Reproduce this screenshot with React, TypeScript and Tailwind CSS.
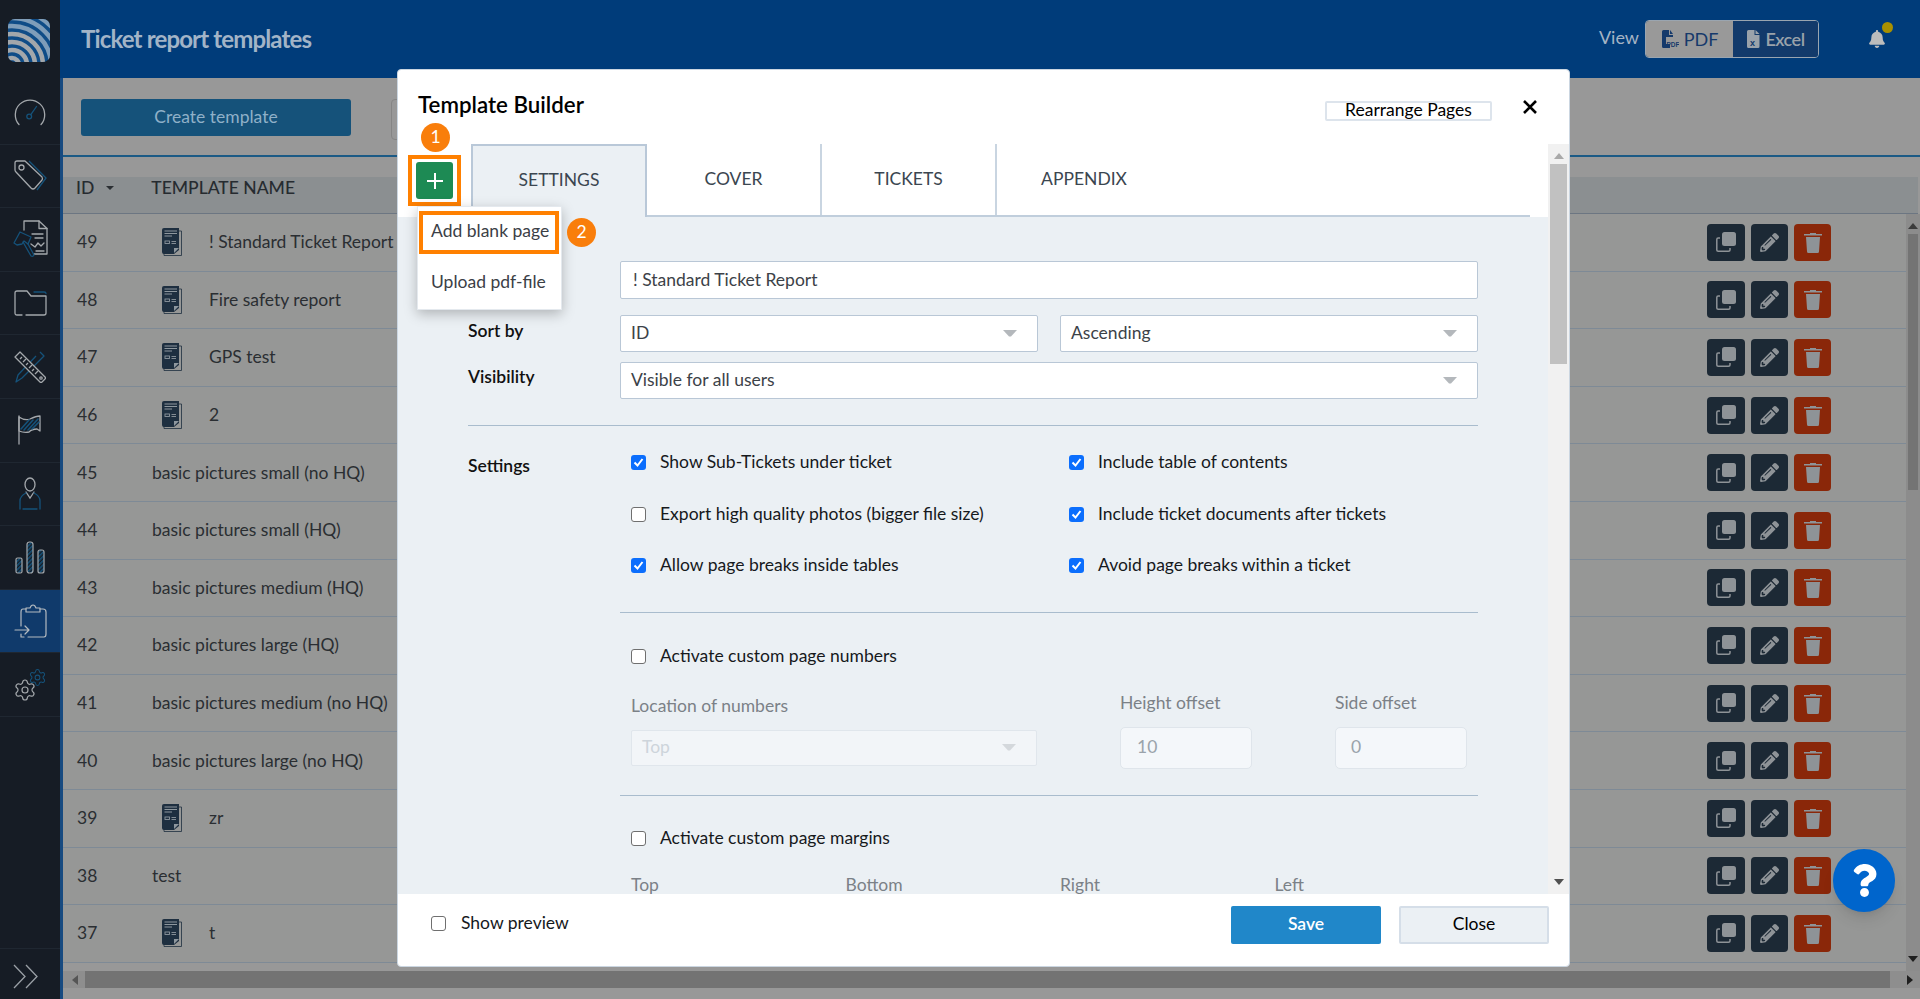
import React from "react";
import { FaBell, FaPencilAlt, FaQuestion } from "react-icons/fa";
import { Settings as Gear } from "lucide-react";

const G = "#a4a8ac";
const B = "#15527a";

function Logo() {
  return (
    <svg width="42" height="43" viewBox="0 0 42 43">
      <defs>
        <clipPath id="lg"><rect width="42" height="43" rx="7" /></clipPath>
      </defs>
      <g clipPath="url(#lg)">
        <rect width="42" height="43" fill="#0f4c87" />
        {[7, 15, 23, 31, 39, 47, 55].map((r, i) => (
          <circle key={r} cx="4" cy="46" r={r} fill="none" stroke={i > 3 ? "#7f9db9" : "#a3a7ab"} strokeWidth="4.6" />
        ))}
      </g>
    </svg>
  );
}

function Gauge() {
  return (
    <svg width="32" height="30" viewBox="0 0 32 30" fill="none" strokeWidth="1.3" strokeLinecap="round">
      <path d="M5 27.5A14.7 14.7 0 1 1 27 27.5" stroke={G} />
      <circle cx="15.2" cy="19.5" r="2.4" stroke={B} />
      <path d="M16.8 17.6L22.5 9.5" stroke={B} />
    </svg>
  );
}
function Tag() {
  return (
    <svg width="33" height="31" viewBox="0 0 33 31" fill="none" strokeWidth="1.3" strokeLinejoin="round">
      <path d="M1 3Q1 1 3 1H11L28 17Q29 19 28 20L21 28Q19 30 17 28L2 12Q1 11 1 10Z" stroke={G} />
      <circle cx="7.5" cy="7.5" r="2.5" stroke={G} />
      <path d="M15 1L32 18L23 30" stroke={B} />
    </svg>
  );
}
function DocHammer() {
  return (
    <svg width="35" height="38" viewBox="0 0 35 38" fill="none" strokeWidth="1.3" strokeLinecap="round" strokeLinejoin="round">
      <path d="M11 10V1H26L34 8.5V34H21" stroke={G} />
      <path d="M26 1V8.5H34" stroke={G} />
      <path d="M19 14H30M22 18H30M18 24L22 27L25 23L28 26L31 23M23 31H31" stroke={G} />
      <path d="M1 23L7 12L18 17L15 24L11 21L9 24L4 25Z" stroke={B} />
      <path d="M10 22L18 36Q20 37 21 35L15 24" stroke={B} />
    </svg>
  );
}
function Folder() {
  return (
    <svg width="33" height="26" viewBox="0 0 33 26" fill="none" strokeWidth="1.3" strokeLinecap="round" strokeLinejoin="round">
      <path d="M8 25H3Q1 25 1 23V3Q1 1 3 1H13L17 6H32V23Q32 25 30 25H12" stroke={G} />
      <path d="M20 2H30Q32 2 32 3.5" stroke={B} />
    </svg>
  );
}
function RulerPencil() {
  return (
    <svg width="32" height="33" viewBox="0 0 32 33" fill="none" strokeWidth="1.3" strokeLinejoin="round">
      <path d="M26 2L30 6L8 28L2 32L4 25L22 6" stroke={B} />
      <path d="M1 7L6 2L31 27Q32 28 31 29L28 32Q27 33 26 32Z" fill="#161c25" stroke={G} />
      <path d="M6 9L8 7M9 12L12 9M12 15L14 13M15 18L18 15M18 21L20 19M21 24L24 21" stroke={G} />
      <circle cx="27" cy="28" r="1.2" stroke={G} />
    </svg>
  );
}
function FlagIcon() {
  return (
    <svg width="24" height="30" viewBox="0 0 24 30" fill="none" strokeWidth="1.3" strokeLinecap="round" strokeLinejoin="round">
      <path d="M1 1V29" stroke={G} />
      <path d="M1 2Q7 6 12 4Q18 1 22 1V16L19 14Q14 14 11 17Q6 18 1 16Z" stroke={G} />
      <path d="M3 14L11 5M6 15L15 5M10 15L20 4M14 14L21 7" stroke={B} strokeWidth="1.6" />
    </svg>
  );
}
function Person() {
  return (
    <svg width="22" height="33" viewBox="0 0 22 33" fill="none" strokeWidth="1.3" strokeLinecap="round">
      <ellipse cx="11" cy="7.5" rx="5" ry="6.5" stroke={G} />
      <path d="M7 15L11 21L15 15" stroke={G} />
      <path d="M1 32V24Q1 19 7 16M21 32V24Q21 19 15 16M4 32H18" stroke={B} />
    </svg>
  );
}
function Bars() {
  return (
    <svg width="30" height="33" viewBox="0 0 30 33" fill="none" strokeWidth="1.2">
      <defs>
        <pattern id="ht" width="3" height="3" patternUnits="userSpaceOnUse" patternTransform="rotate(45)">
          <rect width="1.6" height="3" fill={B} />
        </pattern>
      </defs>
      <rect x="1" y="17" width="6" height="15" rx="1.5" stroke={G} fill="url(#ht)" />
      <rect x="12" y="1" width="6" height="31" rx="2.5" stroke={G} fill="url(#ht)" />
      <rect x="23" y="9" width="6" height="23" rx="2" stroke={G} fill="url(#ht)" />
    </svg>
  );
}
function Clipboard() {
  return (
    <svg width="33" height="34" viewBox="0 0 33 34" fill="none" stroke="#b4bac0" strokeWidth="1.2" strokeLinecap="round" strokeLinejoin="round">
      <path d="M7 22V8Q7 5 9 5H12M26 5H29Q32 5 32 8V30Q32 33 30 33H14" />
      <path d="M12 8V4H16Q17 1 19 1Q21 1 22 4H26V8Z" />
      <path d="M1 26H15M11 22L15 26L11 30M7 30V33H10" />
    </svg>
  );
}
function Gears() {
  return (
    <div className="relative w-[34px] h-[34px]">
      <Gear size={24} strokeWidth={1.2} color={G} className="absolute left-0 bottom-0" />
      <Gear size={19} strokeWidth={1.3} color={B} className="absolute right-0 top-0" />
    </div>
  );
}
function Chevrons() {
  return (
    <svg width="26" height="25" viewBox="0 0 26 25" fill="none" stroke="#9aa0a6" strokeWidth="1.3">
      <path d="M1 1L12 12.5L1 24M13 1L24 12.5L13 24" />
    </svg>
  );
}
function DocIcon() {
  return (
    <svg width="21" height="28" viewBox="0 0 21 28">
      <path d="M3 3H20.5V27.5H3Z" fill="none" stroke="#1e2f40" strokeWidth="1" opacity="0.8" />
      <path d="M1 2Q1 0 3 0H18V22L13 26H3Q1 26 1 24Z" fill="#1e2f40" />
      <path d="M3.5 3H16M3.5 5.5H16M3.5 8H11" stroke="#8e979e" strokeWidth="1" />
      <rect x="4" y="13" width="4.5" height="2.5" fill="none" stroke="#8e979e" strokeWidth="0.9" />
      <path d="M10.5 13.5H15M10.5 15.5H15" stroke="#8e979e" strokeWidth="0.9" />
      <path d="M13 25V20H18Z" fill="#8e979e" />
    </svg>
  );
}
function CopyIcon() {
  return (
    <svg width="20" height="20" viewBox="0 0 20 20">
      <rect x="6" y="0" width="14" height="14" rx="2.5" fill="#8e9397" />
      <path d="M4 6H2.2Q0.8 6 0.8 7.5V18Q0.8 19.2 2.2 19.2H12.5Q14 19.2 14 18V16" fill="none" stroke="#8e9397" strokeWidth="1.5" />
    </svg>
  );
}
function Trash({ color = "#8e9397" }: { color?: string }) {
  return (
    <svg width="18" height="21" viewBox="0 0 18 21">
      <path d="M6 2V1H12V2H18V3.5H0V2Z" fill={color} />
      <path d="M2 5H16L15 19.5Q15 21 13.5 21H4.5Q3 21 3 19.5Z" fill={color} />
    </svg>
  );
}
function PdfIcon() {
  return (
    <svg width="18" height="18" viewBox="0 0 18 18">
      <path d="M1 1.5Q1 0 2.5 0H8V5H12V7H5V14H9V18H2.5Q1 18 1 16.5Z M9 0L12 4H9Z" fill="#163a6b" />
      <text x="5.5" y="17" fontSize="6.5" fontWeight="700" fill="#163a6b" fontFamily="Liberation Sans, sans-serif">PDF</text>
    </svg>
  );
}
function XlsIcon() {
  return (
    <svg width="14" height="18" viewBox="0 0 14 18">
      <path d="M1 1.5Q1 0 2.5 0H8.5V5H13.5V16.5Q13.5 18 12 18H2.5Q1 18 1 16.5Z M9.5 0L13.5 4H9.5Z" fill="#9aa2aa" />
      <text x="4" y="15.5" fontSize="9" fontWeight="700" fill="#123a6b" fontFamily="Liberation Sans, sans-serif">x</text>
    </svg>
  );
}
function Arrow({ color = "#b4b8bc" }: { color?: string }) {
  return (
    <svg width="14" height="7" viewBox="0 0 14 7" className="shrink-0">
      <path d="M0 0H14L8 6.5H6Z" fill={color} />
    </svg>
  );
}
function Tri({ dir, color, w = 10, h = 6 }: { dir: "u" | "d" | "l" | "r"; color: string; w?: number; h?: number }) {
  const d = { u: "M0 10L5 0L10 10Z", d: "M0 0L5 10L10 0Z", l: "M10 0L0 5L10 10Z", r: "M0 0L10 5L0 10Z" }[dir];
  return (
    <svg width={w} height={h} viewBox="0 0 10 10" preserveAspectRatio="none" className="shrink-0">
      <path d={d} fill={color} />
    </svg>
  );
}

function Check({ on = false }: { on?: boolean }) {
  return on ? (
    <span className="w-[15px] h-[15px] rounded-[3px] bg-[#0b6efd] flex items-center justify-center shrink-0">
      <svg width="11" height="11" viewBox="0 0 11 11" fill="none" stroke="#fff" strokeWidth="2">
        <path d="M1.5 5.5L4.5 8.5L9.5 2" />
      </svg>
    </span>
  ) : (
    <span className="w-[15px] h-[15px] rounded-[3px] bg-white border border-[#6f6f6f] shrink-0" />
  );
}

const sideIcons = [
  <Gauge />, <Tag />, <DocHammer />, <Folder />, <RulerPencil />, <FlagIcon />, <Person />, <Bars />, <Clipboard />, <Gears />,
];

const rows: [number, string, boolean][] = [
  [49, "! Standard Ticket Report", true],
  [48, "Fire safety report", true],
  [47, "GPS test", true],
  [46, "2", true],
  [45, "basic pictures small (no HQ)", false],
  [44, "basic pictures small (HQ)", false],
  [43, "basic pictures medium (HQ)", false],
  [42, "basic pictures large (HQ)", false],
  [41, "basic pictures medium (no HQ)", false],
  [40, "basic pictures large (no HQ)", false],
  [39, "zr", true],
  [38, "test", false],
  [37, "t", true],
];

function CheckRow({ on, label }: { on?: boolean; label: string }) {
  return (
    <div className="h-[51.5px] flex items-center gap-[14px] text-[#16191c]">
      <Check on={on} />
      <span className="-mt-[1px]">{label}</span>
    </div>
  );
}

function FieldLabel({ children }: { children: React.ReactNode }) {
  return <div className="w-[152px] shrink-0 font-semibold text-[#111] leading-[24px]">{children}</div>;
}

function Box({ children, className }: { children: React.ReactNode; className: string }) {
  return (
    <div className={"flex items-center justify-between bg-white border border-[#b9c7d6] rounded-[2px] pl-[10px] pr-[20px] text-[#3c4248] " + className}>
      {children}
    </div>
  );
}

export default function App() {
  return (
    <div className="relative flex w-[1920px] h-[999px] overflow-hidden [font-family:Lato,sans-serif] text-[17.5px] bg-[#989898]">
      {/* Sidebar */}
      <aside className="w-[60px] shrink-0 bg-[#161c25] flex flex-col">
        <div className="h-[81px] shrink-0 pl-[8px] pt-[19px]">
          <Logo />
        </div>
        {sideIcons.map((ic, i) => (
          <div
            key={i}
            className={
              "h-[63.6px] shrink-0 flex items-center justify-center border-b border-[#1f2731] " +
              (i === 8 ? "bg-[#103a6b]" : "")
            }
          >
            {ic}
          </div>
        ))}
        <div className="mt-auto h-[51px] border-t border-[#1f2731] pl-[13px] pt-[15px]">
          <Chevrons />
        </div>
      </aside>

      <div className="flex-1 flex flex-col min-w-0">
        {/* Header */}
        <header className="h-[78px] shrink-0 bg-[#003c7a] flex items-center pl-[21px]">
          <h1 className="text-[24px] font-bold tracking-[-0.85px] text-[#a2b4c7]">Ticket report templates</h1>
          <div className="ml-auto flex items-center">
            <span className="text-[18px] text-[#a5b4c5] -mt-[4px] mr-[6px]">View</span>
            <div className="flex h-[38px] w-[174px] border border-[#9aa5b0] rounded-[4px] overflow-hidden">
              <div className="w-[87px] bg-[#999999] flex items-center justify-center gap-[5px] text-[#163a6b] text-[18px]">
                <PdfIcon />
                PDF
              </div>
              <div className="flex-1 bg-[#123a6b] flex items-center justify-center gap-[5px] text-[#9aa2aa] text-[18px] font-semibold tracking-[-0.5px]">
                <XlsIcon />
                Excel
              </div>
            </div>
            <div className="relative w-[20px] ml-[49px] mr-[32px]">
              <FaBell size={18} color="#bcbcbc" />
              <span className="absolute -top-[8px] left-[14px] w-[11px] h-[11px] rounded-full bg-[#a89000]" />
            </div>
          </div>
        </header>

        {/* Body */}
        <div className="flex-1 flex flex-col min-h-0 border-l-[3px] border-[#174a80]">
          <div className="h-[79px] shrink-0 flex items-start pl-[18px] pt-[21px] border-b-2 border-[#1b5a85]">
            <div className="w-[270px] h-[37px] bg-[#15527a] rounded-[3px] flex items-center justify-center text-[#8fb0c8]">
              Create template
            </div>
            <div className="ml-[40px] w-[220px] h-[41px] border border-[#858585] rounded-[4px]" />
          </div>
          <div className="h-[20px] shrink-0" />
          <div className="h-[37px] shrink-0 bg-[#8b8f91] border-b border-[#6c7682] mr-[2px] flex items-start text-[#262b30] font-medium leading-[21px]">
            <span className="ml-[13px]">ID</span>
            <span className="ml-[12px] mt-[9px]">
              <Tri dir="d" color="#2b2f33" w={8} h={4} />
            </span>
            <span className="ml-[37px]">TEMPLATE NAME</span>
          </div>
          <div className="h-[757px] shrink-0 flex">
            <div className="flex-1 overflow-hidden">
              {rows.map(([id, name, doc]) => (
                <div key={id} className="h-[57.6px] border-b border-[#7e8a96] bg-[#969796] flex items-center text-[#2a2e32]">
                  <span className="w-[89px] pl-[14px] shrink-0">{id}</span>
                  {doc ? (
                    <>
                      <span className="w-[57px] pl-[9px] shrink-0 flex">
                        <DocIcon />
                      </span>
                      <span>{name}</span>
                    </>
                  ) : (
                    <span>{name}</span>
                  )}
                  <div className="ml-auto mr-[75px] flex gap-[6px]">
                    <span className="w-[38px] h-[37px] rounded-[4px] bg-[#1c2935] flex items-center justify-center">
                      <CopyIcon />
                    </span>
                    <span className="w-[37px] h-[37px] rounded-[4px] bg-[#1c2935] flex items-center justify-center">
                      <FaPencilAlt size={19} color="#8e9397" />
                    </span>
                    <span className="w-[37px] h-[37px] rounded-[4px] bg-[#8a2709] flex items-center justify-center">
                      <Trash />
                    </span>
                  </div>
                </div>
              ))}
            </div>
            <div className="w-[14px] shrink-0 bg-[#8c8c8c] flex flex-col items-center pt-[9px] pb-[9px]">
              <Tri dir="u" color="#3b3b3b" />
              <div className="w-[10px] h-[256px] bg-[#747474] mt-[5px]" />
              <div className="mt-auto">
                <Tri dir="d" color="#1f1f1f" />
              </div>
            </div>
          </div>
          <div className="h-[17px] shrink-0 bg-[#8e8e8e] flex items-center pl-[9px] pr-[7px]">
            <Tri dir="l" color="#555" w={6} h={10} />
            <div className="ml-[7px] w-[1805px] h-full bg-[#737373]" />
            <div className="ml-auto">
              <Tri dir="r" color="#1f1f1f" w={6} h={10} />
            </div>
          </div>
          <div className="flex-1" />
        </div>
      </div>

      {/* Help bubble */}
      <div className="absolute left-[1833px] top-[849px] w-[62px] h-[63px] rounded-full bg-[#0065cc] flex items-center justify-center shadow-lg">
        <FaQuestion size={33} color="#fff" />
      </div>

      {/* Modal */}
      <div className="absolute left-[397px] top-[69px] w-[1173px] h-[898px] bg-white rounded-[4px] border border-[#cbd6e1] flex flex-col text-[#16191c]">
        <div className="h-[74px] shrink-0 flex items-start">
          <h2 className="ml-[20px] mt-[20px] text-[22.3px] leading-[30px] font-semibold text-black">Template Builder</h2>
          <div className="ml-auto mt-[31px] w-[167px] h-[20px] border-2 border-[#dde4ec] rounded-[2px] flex items-center justify-center text-black leading-none pb-[3px]">
            Rearrange Pages
          </div>
          <svg width="14" height="14" viewBox="0 0 14 14" className="mt-[30px] ml-[31px] mr-[32px]" stroke="#000" strokeWidth="2.6" fill="none">
            <path d="M1 1L13 13M13 1L1 13" />
          </svg>
        </div>

        <div className="flex-1 flex min-h-0">
          <div className="flex-1 flex flex-col min-w-0">
            {/* Tabs */}
            <div className="h-[73px] shrink-0 flex pl-[73px] text-[#3b4650]">
              <div className="flex-1 flex border-b-2 border-[#c0cedc]">
                <div className="w-[176px] h-[73px] bg-[#ebf0f4] border-2 border-b-0 border-[#b9c8d8] flex items-center justify-center pb-[2px]">SETTINGS</div>
                <div className="w-[175px] border-r-2 border-[#c9d5e1] flex items-center justify-center">COVER</div>
                <div className="w-[175px] border-r-2 border-[#c9d5e1] flex items-center justify-center">TICKETS</div>
                <div className="w-[174px] flex items-center justify-center">APPENDIX</div>
              </div>
              <div className="w-[18px] shrink-0" />
            </div>

            {/* Form */}
            <div className="flex-1 bg-[#ebf0f4] overflow-hidden pl-[70px] pr-[70px] pt-[44px] min-h-0">
              <div className="flex">
                <FieldLabel>Name</FieldLabel>
                <Box className="flex-1 h-[38px] pl-[12px]">! Standard Ticket Report</Box>
              </div>
              <div className="flex mt-[16px]">
                <div className="pt-[4px]">
                  <FieldLabel>Sort by</FieldLabel>
                </div>
                <div className="flex-1 flex gap-[22px]">
                  <Box className="w-[418px] h-[37px]">
                    ID
                    <Arrow />
                  </Box>
                  <Box className="flex-1 h-[37px]">
                    Ascending
                    <Arrow />
                  </Box>
                </div>
              </div>
              <div className="flex mt-[10px]">
                <div className="pt-[3px]">
                  <FieldLabel>Visibility</FieldLabel>
                </div>
                <Box className="flex-1 h-[37px]">
                  Visible for all users
                  <Arrow />
                </Box>
              </div>
              <div className="h-px bg-[#a9bccd] mt-[26px]" />

              <div className="flex mt-[11px]">
                <div className="pt-[17px]">
                  <FieldLabel>Settings</FieldLabel>
                </div>
                <div className="flex-1 pl-[11px] grid grid-cols-[438px_1fr]">
                  <CheckRow on label="Show Sub-Tickets under ticket" />
                  <CheckRow on label="Include table of contents" />
                  <CheckRow label="Export high quality photos (bigger file size)" />
                  <CheckRow on label="Include ticket documents after tickets" />
                  <CheckRow on label="Allow page breaks inside tables" />
                  <CheckRow on label="Avoid page breaks within a ticket" />
                </div>
              </div>

              <div className="ml-[152px] mt-[20px]">
                <div className="h-px bg-[#a9bccd]" />
                <div className="pl-[11px] mt-[32px] h-[24px] flex items-center gap-[14px]">
                  <Check />
                  <span>Activate custom page numbers</span>
                </div>
                <div className="flex text-[#7b8187]">
                  <div className="ml-[11px] w-[406px] pt-[25px]">
                    <div className="leading-[24px]">Location of numbers</div>
                    <div className="mt-[12px] h-[36px] bg-[#f2f5f8] border border-[#e0e6ec] rounded-[2px] flex items-center justify-between pl-[10px] pr-[20px] text-[#cdd4db]">
                      Top
                      <Arrow color="#d4d8dc" />
                    </div>
                  </div>
                  <div className="ml-[83px] w-[132px] pt-[22px]">
                    <div className="leading-[24px]">Height offset</div>
                    <div className="mt-[12px] h-[42px] bg-[#f4f7fa] border border-[#dfe5eb] rounded-[5px] flex items-center pl-[16px] text-[#9aa3ab]">10</div>
                  </div>
                  <div className="ml-[83px] w-[132px] pt-[22px]">
                    <div className="leading-[24px]">Side offset</div>
                    <div className="mt-[12px] h-[42px] bg-[#f4f7fa] border border-[#dfe5eb] rounded-[5px] flex items-center pl-[15px] text-[#9aa3ab]">0</div>
                  </div>
                </div>
                <div className="h-px bg-[#a9bccd] mt-[26px]" />
                <div className="pl-[11px] mt-[31px] h-[24px] flex items-center gap-[14px]">
                  <Check />
                  <span>Activate custom page margins</span>
                </div>
                <div className="pl-[11px] mt-[22px] grid grid-cols-[214.5px_214.5px_214.5px_1fr] leading-[24px] text-[#7b8187]">
                  <span>Top</span>
                  <span>Bottom</span>
                  <span>Right</span>
                  <span>Left</span>
                </div>
              </div>
            </div>
          </div>

          {/* Modal scrollbar */}
          <div className="w-[21px] shrink-0 bg-[#f1f1f1] flex flex-col items-center pt-[9px] pb-[9px]">
            <Tri dir="u" color="#a9a9a9" />
            <div className="w-[17px] h-[200px] bg-[#c1c1c1] mt-[5px]" />
            <div className="mt-auto">
              <Tri dir="d" color="#505050" />
            </div>
          </div>
        </div>

        {/* Footer */}
        <div className="h-[72px] shrink-0 flex items-start pl-[33px] pr-[20px]">
          <div className="mt-[22px] h-[15px] flex items-center gap-[15px]">
            <Check />
            <span>Show preview</span>
          </div>
          <div className="ml-auto mt-[12px] w-[150px] h-[38px] bg-[#2087c9] rounded-[2px] flex items-center justify-center text-white font-semibold pb-[2px]">Save</div>
          <div className="ml-[18px] mt-[12px] w-[150px] h-[38px] bg-[#ebf0f4] border-2 border-[#d5dee8] rounded-[2px] flex items-center justify-center text-black pb-[2px]">Close</div>
        </div>

        {/* Annotations over the modal */}
        <span className="absolute left-[23px] top-[53px] w-[29px] h-[29px] rounded-full bg-[#f97e0b] text-white flex items-center justify-center">1</span>
        <div className="absolute left-[10px] top-[85px] w-[53px] h-[51px] border-4 border-[#ff8000] flex items-center justify-center">
          <span className="w-[37px] h-[37px] rounded-[3px] bg-[#1d8a54] flex items-center justify-center">
            <svg width="16" height="16" viewBox="0 0 16 16" stroke="#fff" strokeWidth="2" fill="none">
              <path d="M8 0V16M0 8H16" />
            </svg>
          </span>
        </div>
        <div className="absolute left-[19px] top-[136px] w-[145px] h-[104px] bg-white border border-[#e4e9ee] shadow-[0_4px_12px_rgba(0,0,0,0.25)] text-[#3b4046]">
          <div className="mt-[4px] ml-[1px] w-[140px] h-[43px] border-4 border-[#ff8000] flex items-center pl-[8px] pb-[3px] whitespace-nowrap">Add blank page</div>
          <div className="mt-[16px] pl-[13px] leading-[24px]">Upload pdf-file</div>
        </div>
        <span className="absolute left-[169px] top-[148px] w-[29px] h-[29px] rounded-full bg-[#f97e0b] text-white flex items-center justify-center">2</span>
      </div>
    </div>
  );
}
